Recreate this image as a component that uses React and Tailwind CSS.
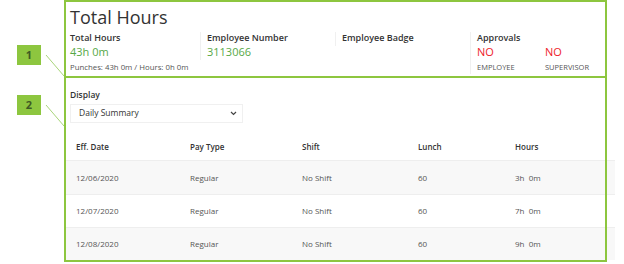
import React from 'react'

const font = { fontFamily: '"Open Sans", "Liberation Sans", sans-serif' }

function Callout({ n, className }) {
  return (
    <div
      className={`flex h-[20px] w-[24px] items-center justify-center bg-[#8dc63f] text-[11px] font-bold text-[#3f5a24] ${className}`}
    >
      {n}
    </div>
  )
}

function Stat({ label, children, first }) {
  return (
    <div className={first ? 'pr-2' : 'border-l border-[#f0f0f0] pl-[6px]'}>
      <div className="text-[9px] font-semibold leading-[12px] text-[#333]">{label}</div>
      {children}
    </div>
  )
}

const rows = [
  { date: '12/06/2020', hours: '3h\u00a0 0m', shade: true },
  { date: '12/07/2020', hours: '7h\u00a0 0m', shade: false },
  { date: '12/08/2020', hours: '9h\u00a0 0m', shade: true },
]

const cols = 'grid grid-cols-[114px_112px_116px_97px_1fr]'

export default function App() {
  return (
    <div className="flex h-[264px] w-[624px] overflow-hidden bg-white" style={font}>
      {/* callouts */}
      <div className="relative w-[64px] shrink-0">
        <svg className="absolute inset-0" width="64" height="264">
          <line x1="46" y1="55" x2="64" y2="76" stroke="#a8d47a" strokeWidth="1" />
          <line x1="46" y1="105" x2="64" y2="126" stroke="#a8d47a" strokeWidth="1" />
        </svg>
        <Callout n="1" className="ml-[17px] mt-[45px]" />
        <Callout n="2" className="ml-[17px] mt-[30px]" />
      </div>

      <div className="relative flex h-[262px] w-[543px] shrink-0 flex-col">
        {/* section 1 */}
        <div className="h-[78px] border-b-2 border-[#8dc63f] pl-[6px] pt-[6px]">
          <div className="text-[18px] leading-[22px] text-[#333]">Total Hours</div>
          <div className="mt-[4px] grid grid-cols-[130px_135px_135px_1fr] items-start">
            <Stat label="Total Hours" first>
              <div className="text-[11px] leading-[16px] text-[#56a846]">43h 0m</div>
              <div className="text-[7.8px] leading-[14px] text-[#555]">
                Punches: 43h 0m / Hours: 0h 0m
              </div>
            </Stat>
            <Stat label="Employee Number">
              <div className="text-[11px] leading-[16px] text-[#56a846]">3113066</div>
            </Stat>
            <Stat label="Employee Badge">
              <div className="h-[2px]" />
            </Stat>
            <Stat label="Approvals">
              <div className="grid grid-cols-[68px_1fr]">
                <div>
                  <div className="text-[11px] leading-[16px] text-[#ee1c2b]">NO</div>
                  <div className="text-[7.5px] leading-[14px] text-[#555]">EMPLOYEE</div>
                </div>
                <div>
                  <div className="text-[11px] leading-[16px] text-[#ee1c2b]">NO</div>
                  <div className="text-[7.5px] leading-[14px] text-[#555]">SUPERVISOR</div>
                </div>
              </div>
            </Stat>
          </div>
        </div>

        {/* section 2 */}
        <div className="flex flex-col pl-[2px]">
          <div className="pl-[4px] pt-[11px]">
            <div className="text-[8.5px] font-semibold leading-[12px] text-[#333]">Display</div>
            <div className="mt-[3px] flex h-[19px] w-[173px] items-center justify-between border border-[#f0f0f0] pl-[8px] pr-[5px] text-[8.5px] text-[#333]">
              <span>Daily Summary</span>
              <svg width="7" height="5" viewBox="0 0 7 5">
                <path d="M1 1l2.5 2.5L6 1" fill="none" stroke="#444" strokeWidth="1.2" />
              </svg>
            </div>
          </div>

          <div className="-mr-[8px] mt-[10px] flex flex-col text-[8px]">
            <div className={`${cols} h-[27px] items-center font-semibold text-[#333]`}>
              <div className="pl-[10px]">Eff. Date</div>
              <div className="pl-[10px]">Pay Type</div>
              <div className="pl-[10px]">Shift</div>
              <div className="pl-[10px]">Lunch</div>
              <div className="pl-[10px]">Hours</div>
            </div>
            {rows.map((r, i) => (
              <div
                key={r.date}
                className={`${cols} ${i === 0 ? 'h-[34px]' : 'h-[33px]'} items-center border-t border-[#eeeeee] text-[#555] ${r.shade ? 'bg-[#f8f8f8]' : 'bg-white'}`}
              >
                <div className="pl-[10px]">{r.date}</div>
                <div className="pl-[10px]">Regular</div>
                <div className="pl-[10px]">No Shift</div>
                <div className="pl-[10px]">60</div>
                <div className="pl-[10px] whitespace-pre">{r.hours}</div>
              </div>
            ))}
          </div>
        </div>

        {/* outer frame drawn over the rows */}
        <div className="pointer-events-none absolute inset-0 border-2 border-[#8dc63f]" />
      </div>
    </div>
  )
}
